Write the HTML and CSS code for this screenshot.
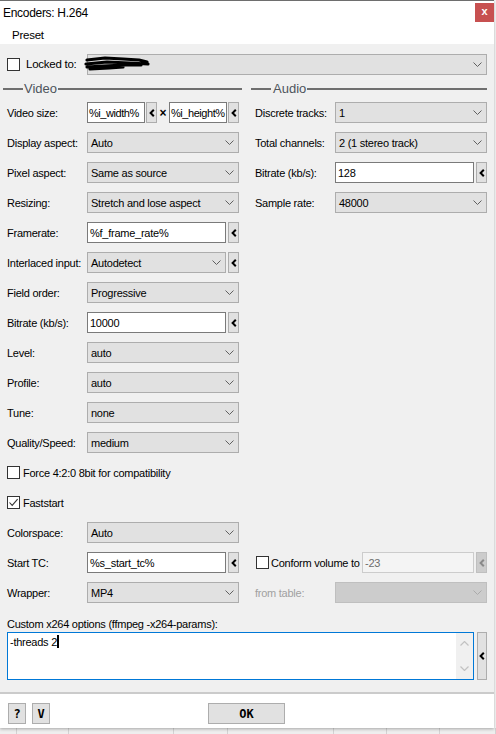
FILE: index.html
```html
<!DOCTYPE html>
<html>
<head>
<meta charset="utf-8">
<link rel="stylesheet" href="styles.css">
</head>
<body>
<div class="window">
  <div class="titlebar">
    <span class="title">Encoders: H.264</span>
    <div class="close">x</div>
  </div>
  <div class="menubar"><span>Preset</span></div>
  <div class="content">
    <div class="locked-row">
      <span class="cb"></span>
      <span class="locked-lbl">Locked to:</span>
      <div class="combo wide"><span></span><svg class="chev" width="9" height="5" viewBox="0 0 9 5"><path d="M0.5 0.5 L4.5 4.5 L8.5 0.5" fill="none" stroke="#606060" stroke-width="1"/></svg></div>
      <svg class="scribble" width="68" height="18" viewBox="0 0 68 18"><path d="M4 5 L22 3 L40 4 L56 5 L64 7 M3 9 L24 7 L46 8 L65 9 M4 12 L20 11 L42 10 L58 10 M7 14 L26 13 L40 12" fill="none" stroke="#000" stroke-width="3.2" stroke-linecap="round" stroke-linejoin="round"/></svg>
    </div>
    <div class="groups">
      <div class="gh video"><span>Video</span></div>
      <div class="gh audio"><span>Audio</span></div>
    </div>
    <div class="cols">
      <div class="col">
        <div class="row"><span class="lbl">Video size:</span>
          <div class="input half"><span>%i_width%</span></div><div class="sbtn tight"><svg width="6" height="8" viewBox="0 0 6 8"><path d="M4.8 0.8 L1.6 4 L4.8 7.2" fill="none" stroke="#000" stroke-width="2"/></svg></div>
          <span class="times">×</span>
          <div class="input half"><span>%i_height%</span></div><div class="sbtn tight"><svg width="6" height="8" viewBox="0 0 6 8"><path d="M4.8 0.8 L1.6 4 L4.8 7.2" fill="none" stroke="#000" stroke-width="2"/></svg></div>
        </div>
        <div class="row"><span class="lbl">Display aspect:</span><div class="combo"><span>Auto</span><svg class="chev" width="9" height="5" viewBox="0 0 9 5"><path d="M0.5 0.5 L4.5 4.5 L8.5 0.5" fill="none" stroke="#606060" stroke-width="1"/></svg></div></div>
        <div class="row"><span class="lbl">Pixel aspect:</span><div class="combo"><span>Same as source</span><svg class="chev" width="9" height="5" viewBox="0 0 9 5"><path d="M0.5 0.5 L4.5 4.5 L8.5 0.5" fill="none" stroke="#606060" stroke-width="1"/></svg></div></div>
        <div class="row"><span class="lbl">Resizing:</span><div class="combo"><span>Stretch and lose aspect</span><svg class="chev" width="9" height="5" viewBox="0 0 9 5"><path d="M0.5 0.5 L4.5 4.5 L8.5 0.5" fill="none" stroke="#606060" stroke-width="1"/></svg></div></div>
        <div class="row"><span class="lbl">Framerate:</span><div class="input grow"><span>%f_frame_rate%</span></div><div class="sbtn"><svg width="6" height="8" viewBox="0 0 6 8"><path d="M4.8 0.8 L1.6 4 L4.8 7.2" fill="none" stroke="#000" stroke-width="2"/></svg></div></div>
        <div class="row"><span class="lbl">Interlaced input:</span><div class="combo"><span>Autodetect</span><svg class="chev" width="9" height="5" viewBox="0 0 9 5"><path d="M0.5 0.5 L4.5 4.5 L8.5 0.5" fill="none" stroke="#606060" stroke-width="1"/></svg></div><div class="sbtn"><svg width="6" height="8" viewBox="0 0 6 8"><path d="M4.8 0.8 L1.6 4 L4.8 7.2" fill="none" stroke="#000" stroke-width="2"/></svg></div></div>
        <div class="row"><span class="lbl">Field order:</span><div class="combo"><span>Progressive</span><svg class="chev" width="9" height="5" viewBox="0 0 9 5"><path d="M0.5 0.5 L4.5 4.5 L8.5 0.5" fill="none" stroke="#606060" stroke-width="1"/></svg></div></div>
        <div class="row"><span class="lbl">Bitrate (kb/s):</span><div class="input grow"><span>10000</span></div><div class="sbtn"><svg width="6" height="8" viewBox="0 0 6 8"><path d="M4.8 0.8 L1.6 4 L4.8 7.2" fill="none" stroke="#000" stroke-width="2"/></svg></div></div>
        <div class="row"><span class="lbl">Level:</span><div class="combo"><span>auto</span><svg class="chev" width="9" height="5" viewBox="0 0 9 5"><path d="M0.5 0.5 L4.5 4.5 L8.5 0.5" fill="none" stroke="#606060" stroke-width="1"/></svg></div></div>
        <div class="row"><span class="lbl">Profile:</span><div class="combo"><span>auto</span><svg class="chev" width="9" height="5" viewBox="0 0 9 5"><path d="M0.5 0.5 L4.5 4.5 L8.5 0.5" fill="none" stroke="#606060" stroke-width="1"/></svg></div></div>
        <div class="row"><span class="lbl">Tune:</span><div class="combo"><span>none</span><svg class="chev" width="9" height="5" viewBox="0 0 9 5"><path d="M0.5 0.5 L4.5 4.5 L8.5 0.5" fill="none" stroke="#606060" stroke-width="1"/></svg></div></div>
        <div class="row"><span class="lbl">Quality/Speed:</span><div class="combo"><span>medium</span><svg class="chev" width="9" height="5" viewBox="0 0 9 5"><path d="M0.5 0.5 L4.5 4.5 L8.5 0.5" fill="none" stroke="#606060" stroke-width="1"/></svg></div></div>
        <div class="row"><span class="cb"></span><span class="cb-lbl">Force 4:2:0 8bit for compatibility</span></div>
        <div class="row"><span class="cb"><svg width="11" height="11" viewBox="0 0 11 11"><path d="M1.5 5.5 L4.2 8.4 L9.6 2.2" fill="none" stroke="#333" stroke-width="1.1"/></svg></span><span class="cb-lbl">Faststart</span></div>
        <div class="row"><span class="lbl">Colorspace:</span><div class="combo"><span>Auto</span><svg class="chev" width="9" height="5" viewBox="0 0 9 5"><path d="M0.5 0.5 L4.5 4.5 L8.5 0.5" fill="none" stroke="#606060" stroke-width="1"/></svg></div></div>
        <div class="row"><span class="lbl">Start TC:</span><div class="input grow"><span>%s_start_tc%</span></div><div class="sbtn"><svg width="6" height="8" viewBox="0 0 6 8"><path d="M4.8 0.8 L1.6 4 L4.8 7.2" fill="none" stroke="#000" stroke-width="2"/></svg></div></div>
        <div class="row"><span class="lbl">Wrapper:</span><div class="combo"><span>MP4</span><svg class="chev" width="9" height="5" viewBox="0 0 9 5"><path d="M0.5 0.5 L4.5 4.5 L8.5 0.5" fill="none" stroke="#606060" stroke-width="1"/></svg></div></div>
      </div>
      <div class="col">
        <div class="row"><span class="lbl">Discrete tracks:</span><div class="combo"><span>1</span><svg class="chev" width="9" height="5" viewBox="0 0 9 5"><path d="M0.5 0.5 L4.5 4.5 L8.5 0.5" fill="none" stroke="#606060" stroke-width="1"/></svg></div></div>
        <div class="row"><span class="lbl">Total channels:</span><div class="combo"><span>2 (1 stereo track)</span><svg class="chev" width="9" height="5" viewBox="0 0 9 5"><path d="M0.5 0.5 L4.5 4.5 L8.5 0.5" fill="none" stroke="#606060" stroke-width="1"/></svg></div></div>
        <div class="row"><span class="lbl">Bitrate (kb/s):</span><div class="input grow"><span>128</span></div><div class="sbtn"><svg width="6" height="8" viewBox="0 0 6 8"><path d="M4.8 0.8 L1.6 4 L4.8 7.2" fill="none" stroke="#000" stroke-width="2"/></svg></div></div>
        <div class="row"><span class="lbl">Sample rate:</span><div class="combo"><span>48000</span><svg class="chev" width="9" height="5" viewBox="0 0 9 5"><path d="M0.5 0.5 L4.5 4.5 L8.5 0.5" fill="none" stroke="#606060" stroke-width="1"/></svg></div></div>
        <div class="row at16"><span class="cb conform-cb"></span><span class="conform-lbl">Conform volume to</span><div class="input disabled grow"><span>-23</span></div><div class="sbtn disabled"><svg width="6" height="8" viewBox="0 0 6 8"><path d="M4.8 0.8 L1.6 4 L4.8 7.2" fill="none" stroke="#8a8a8a" stroke-width="2"/></svg></div></div>
        <div class="row at17"><span class="lbl dim">from table:</span><div class="combo disabled"><span></span><svg class="chev" width="9" height="5" viewBox="0 0 9 5"><path d="M0.5 0.5 L4.5 4.5 L8.5 0.5" fill="none" stroke="#aaaaaa" stroke-width="1"/></svg></div></div>
      </div>
    </div>
    <div class="custom-lbl">Custom x264 options (ffmpeg -x264-params):</div>
    <div class="custom-row">
      <div class="textarea">
        <div class="ta-text">-threads 2<span class="caret"></span></div>
        <div class="ta-scroll">
          <svg width="9" height="5" viewBox="0 0 9 5"><path d="M0.5 4.5 L4.5 0.5 L8.5 4.5" fill="none" stroke="#c2c2c2" stroke-width="1.2"/></svg>
          <svg width="9" height="5" viewBox="0 0 9 5"><path d="M0.5 0.5 L4.5 4.5 L8.5 0.5" fill="none" stroke="#c2c2c2" stroke-width="1.2"/></svg>
        </div>
      </div>
      <div class="sbtn tall"><svg width="6" height="8" viewBox="0 0 6 8"><path d="M4.8 0.8 L1.6 4 L4.8 7.2" fill="none" stroke="#000" stroke-width="2"/></svg></div>
    </div>
  </div>
  <div class="footer">
    <div class="fbtn small">?</div>
    <div class="fbtn small">V</div>
    <div class="fbtn ok">OK</div>
  </div>
</div>
<div class="under">
  <span></span><span></span><span></span><span></span><span></span><span></span><span></span><span></span><span></span>
</div>
</body>
</html>
```

FILE: styles.css
```css
* { box-sizing: border-box; }
html, body { margin: 0; padding: 0; }
body {
  width: 496px;
  height: 734px;
  overflow: hidden;
  background: #f7f7f7;
  font-family: "Liberation Sans", Arial, sans-serif;
  font-size: 11px;
  letter-spacing: -0.25px;
  color: #000;
}
.window {
  width: 494px;
  height: 728px;
  display: flex;
  flex-direction: column;
  background: #f0f0f0;
  border-top: 1px solid #6e6e6e;
  box-shadow: 0 1px 3px rgba(0,0,0,0.3);
  position: relative;
  z-index: 1;
}
.titlebar {
  height: 26px;
  flex: none;
  background: #fff;
  display: flex;
  justify-content: space-between;
  align-items: flex-start;
  padding-left: 3px;
}
.title {
  font-size: 12px;
  letter-spacing: -0.3px;
  line-height: 26px;
  margin-top: -1px;
}
.close {
  width: 19px;
  height: 19px;
  margin-top: 2px;
  background: #c75050;
  color: #fff;
  font-weight: bold;
  font-size: 11px;
  letter-spacing: 0;
  display: flex;
  align-items: center;
  justify-content: center;
  line-height: 1;
  padding-bottom: 2px;
}
.menubar {
  height: 17px;
  flex: none;
  background: #fff;
  padding-left: 12px;
  line-height: 17px;
  font-size: 11.5px;
}
.content {
  flex: 1;
  padding: 10px 7px 0 7px;
}
.locked-row {
  position: relative;
  display: flex;
  align-items: center;
  height: 20px;
}
.cb {
  width: 13px;
  height: 13px;
  flex: none;
  border: 1px solid #333;
  background: #fff;
  display: flex;
  align-items: center;
  justify-content: center;
}
.locked-lbl {
  width: 67px;
  flex: none;
  padding-left: 6px;
  white-space: nowrap;
  font-size: 11.5px;
}
.scribble {
  position: absolute;
  left: 76px;
  top: 1px;
}
.groups {
  display: flex;
  margin-top: 8px;
  height: 14px;
}
.gh {
  display: flex;
  align-items: center;
  font-size: 13px;
  letter-spacing: 0;
  color: #4e545c;
}
.gh::before {
  content: "";
  width: 20px;
  height: 2px;
  background: #6f6f6f;
  flex: none;
}
.gh::after {
  content: "";
  flex: 1;
  height: 2px;
  background: #6f6f6f;
}
.gh span { padding: 0 1px 0 1px; line-height: 14px; }
.gh.video { width: 239px; margin-left: -4px; }
.gh.audio { width: 236px; margin-left: 9px; }
.gh.audio span { padding-left: 2px; }
.cols {
  margin-top: 6px;
  display: flex;
  gap: 16px;
}
.col {
  width: 232px;
  display: grid;
  grid-template-rows: repeat(17, 21px);
  row-gap: 9px;
}
.at16 { grid-row: 16; }
.at17 { grid-row: 17; }
.row {
  display: flex;
  align-items: center;
  height: 21px;
}
.lbl {
  width: 80px;
  flex: none;
  white-space: nowrap;
}
.lbl.dim { color: #a0a0a0; }
.combo {
  flex: 1;
  height: 21px;
  background: #e1e1e1;
  border: 1px solid #adadad;
  display: flex;
  align-items: center;
  justify-content: space-between;
  padding: 0 4px 0 3px;
  white-space: nowrap;
  overflow: hidden;
}
.combo.wide { flex: 1; }
.combo.disabled {
  background: #cccccc;
  border-color: #bfbfbf;
}
.chev { flex: none; }
.input {
  height: 21px;
  background: #fff;
  border: 1px solid #7a7a7a;
  padding-left: 2px;
  display: flex;
  align-items: center;
  white-space: nowrap;
  overflow: hidden;
}
.input.half { width: 58px; flex: none; padding-left: 1px; letter-spacing: -0.45px; }
.input.grow { flex: 1; }
.input.disabled {
  background: #f4f4f4;
  border-color: #cccccc;
  color: #6d6d6d;
}
.sbtn {
  width: 11px;
  height: 21px;
  flex: none;
  margin-left: 2px;
  background: #e1e1e1;
  border: 1px solid #adadad;
  display: flex;
  align-items: center;
  justify-content: center;
}
.sbtn.tight { margin-left: 1px; }
.sbtn.disabled {
  background: #cccccc;
  border-color: #bfbfbf;
}
.times {
  width: 12px;
  flex: none;
  text-align: center;
  font-weight: bold;
  font-size: 12px;
}
.cb-lbl {
  padding-left: 3px;
  white-space: nowrap;
}
.conform-cb { margin-left: 1px; }
.conform-lbl {
  width: 93px;
  flex: none;
  padding-left: 2px;
  white-space: nowrap;
}
.custom-lbl {
  margin-top: 14px;
  height: 15px;
  line-height: 15px;
  white-space: nowrap;
}
.custom-row {
  display: flex;
  height: 48px;
}
.textarea {
  flex: 1;
  background: #fff;
  border: 1px solid #0078d7;
  display: flex;
}
.ta-text {
  flex: 1;
  padding: 2px 0 0 2px;
  line-height: 14px;
  white-space: nowrap;
}
.caret {
  display: inline-block;
  width: 2px;
  height: 13px;
  background: #000;
  vertical-align: -2px;
  margin-left: 0;
}
.ta-scroll {
  width: 17px;
  flex: none;
  background: #f0f0f0;
  display: flex;
  flex-direction: column;
  align-items: center;
  justify-content: space-between;
  padding: 8px 0 8px 0;
}
.sbtn.tall {
  height: 48px;
  width: 10px;
  margin-left: 3px;
}
.footer {
  height: 36px;
  flex: none;
  background: #fff;
  border-top: 2px solid #cbcbcb;
  display: flex;
  align-items: flex-start;
  padding: 9px 0 0 8px;
  gap: 6px;
}
.fbtn {
  height: 21px;
  background: #e1e1e1;
  border: 1px solid #adadad;
  display: flex;
  align-items: center;
  justify-content: center;
  font-family: "DejaVu Sans Mono", "Liberation Mono", monospace;
  font-weight: bold;
  font-size: 12px;
  letter-spacing: 0;
}
.fbtn.small { width: 18px; }
.fbtn.ok { width: 77px; margin-left: 152px; }
.under {
  display: flex;
  height: 6px;
  background: #eeeeee;
}
.under span {
  flex: none;
  border-right: 1px solid #d2d2d2;
}
.under span:nth-child(1) { width: 17px; }
.under span:nth-child(2) { width: 52px; }
.under span:nth-child(3) { width: 105px; }
.under span:nth-child(4) { width: 54px; }
.under span:nth-child(5) { width: 106px; }
.under span:nth-child(6) { width: 53px; }
.under span:nth-child(7) { width: 53px; }
.under span:nth-child(8) { width: 56px; }
.under span:nth-child(9) { width: 0; border: none; }
```
